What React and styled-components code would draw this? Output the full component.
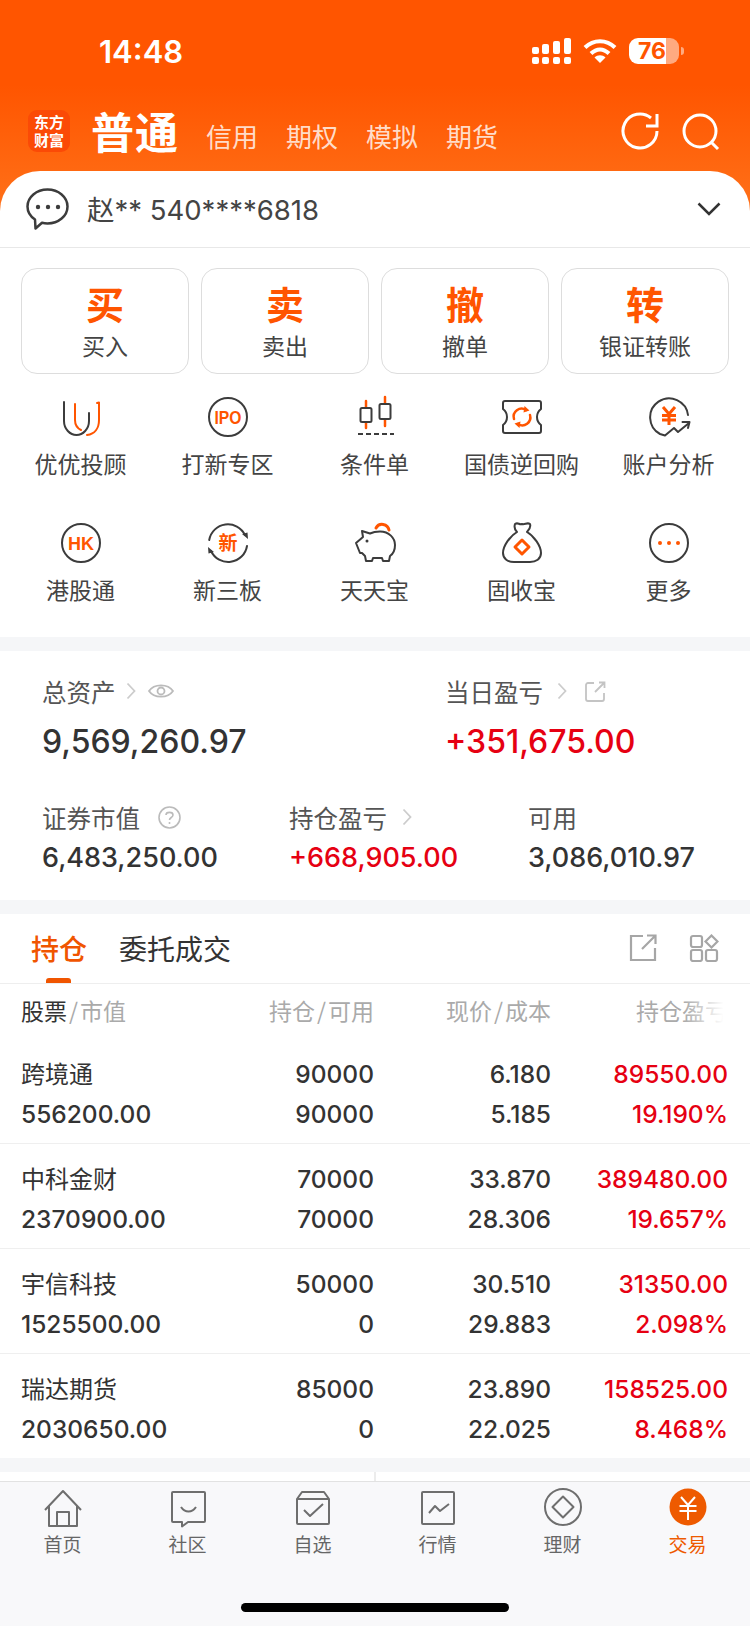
import React from 'react';
import styled, { createGlobalStyle } from 'styled-components';

const CJK = '"Noto Sans CJK SC", sans-serif';
const NUM = 'Inter, "Noto Sans CJK SC", sans-serif';
const ORANGE = '#ff5500';
const RED = '#e60012';
const DARK = '#333333';
const GRAY_BG = '#f5f6f8';

const GlobalStyle = createGlobalStyle`
  html, body {
    margin: 0;
    padding: 0;
    background: #ffffff;
  }
  * {
    box-sizing: border-box;
  }
`;

const Page = styled.div`
  width: 750px;
  height: 1626px;
  overflow: hidden;
  font-family: ${CJK};
  color: ${DARK};
  background: linear-gradient(180deg, #ff5500 0, #ff5500 85px, #ff7119 211px) no-repeat top / 100% 211px, #ffffff;
`;

const StatusBar = styled.div`
  height: 102px;
  display: flex;
  align-items: center;
  padding: 0 71px 0 99px;
`;
const Clock = styled.div`
  font-family: Inter, sans-serif;
  font-weight: 600;
  font-size: 31px;
  color: #ffffff;
  flex: 1;
`;
const StatusIcons = styled.div`
  display: flex;
  align-items: center;
  gap: 12px;
`;
const Battery = styled.div`
  position: relative;
  width: 50px;
  height: 26px;
  border-radius: 9px;
  background: linear-gradient(90deg, #ffffff 75%, rgba(255, 255, 255, 0.5) 75%);
  color: ${ORANGE};
  font-family: Inter, sans-serif;
  font-weight: 700;
  font-size: 23px;
  line-height: 26px;
  padding-left: 9px;
  &::after {
    content: '';
    position: absolute;
    right: -5px;
    top: 9px;
    width: 3px;
    height: 8px;
    border-radius: 0 3px 3px 0;
    background: rgba(255, 255, 255, 0.5);
  }
`;

const Nav = styled.div`
  height: 69px;
  padding: 8px 30px 0 28px;
  display: flex;
  align-items: flex-start;
`;
const Logo = styled.div`
  width: 42px;
  height: 42px;
  border-radius: 9px;
  background: #fb4a06;
  color: #ffffff;
  font-weight: 700;
  font-size: 15px;
  line-height: 18px;
  text-align: center;
  padding-top: 3px;
`;
const NavMain = styled.div`
  margin: -3px 0 0 21px;
  width: 115px;
  font-weight: 700;
  font-size: 43px;
  line-height: 46px;
  letter-spacing: 1px;
  color: #ffffff;
`;
const NavTabs = styled.div`
  display: flex;
  gap: 28px;
  flex: 1;
  margin-top: 9px;
`;
const NavTab = styled.div`
  font-size: 26px;
  line-height: 34px;
  color: rgba(255, 255, 255, 0.8);
`;
const NavIcons = styled.div`
  display: flex;
  gap: 20px;
  margin-top: 1px;
`;

const AccountRow = styled.div`
  height: 77px;
  background: #ffffff;
  border-radius: 40px 40px 0 0;
  border-bottom: 1px solid #e8e8e8;
  display: flex;
  align-items: center;
  padding: 0 29px 0 26px;
`;
const AccountName = styled.div`
  flex: 1;
  margin: -2px 0 0 17px;
  font-family: ${NUM};
  font-size: 27.5px;
  color: #444444;
`;

const Actions = styled.div`
  display: grid;
  grid-template-columns: repeat(4, 168px);
  gap: 12px;
  padding: 20px 21px 0;
`;
const Action = styled.div`
  height: 106px;
  border: 1.5px solid #dddddd;
  border-radius: 16px;
  display: flex;
  flex-direction: column;
  align-items: center;
  padding-top: 9px;
`;
const ActionMain = styled.div`
  font-weight: 700;
  font-size: 38px;
  line-height: 50px;
  color: ${ORANGE};
`;
const ActionSub = styled.div`
  font-size: 23px;
  line-height: 30px;
  margin-top: 2px;
  color: #444444;
`;

const Shortcuts = styled.div`
  display: grid;
  grid-template-columns: repeat(5, 147px);
  row-gap: 41px;
  padding: 21px 0 31px 7px;
`;
const Shortcut = styled.div`
  height: 85px;
  display: flex;
  flex-direction: column;
  align-items: center;
`;
const ShortcutLabel = styled.div`
  margin-top: 9px;
  font-size: 23px;
  line-height: 30px;
  white-space: nowrap;
  color: #444444;
`;

const Divider = styled.div`
  height: 14px;
  background: ${GRAY_BG};
`;

const Assets = styled.div`
  height: 249px;
  padding: 24px 0 0 42px;
`;
const AssetRow = styled.div`
  display: grid;
  grid-template-columns: ${p => p.$cols};
  margin-top: ${p => p.$top || 0}px;
`;
const AssetLabel = styled.div`
  display: flex;
  align-items: center;
  height: 32px;
  font-size: 24.5px;
  color: #555555;
`;
const BigValue = styled.div`
  margin-top: 15px;
  font-family: ${NUM};
  font-weight: 550;
  font-size: 32px;
  line-height: 40px;
  color: ${p => p.$color || DARK};
`;
const SmallValue = styled.div`
  margin-top: 7px;
  font-family: ${NUM};
  font-weight: 550;
  font-size: 27px;
  line-height: 36px;
  color: ${p => p.$color || DARK};
`;

const TabsRow = styled.div`
  height: 70px;
  border-bottom: 1px solid #eeeeee;
  display: flex;
  padding: 0 31px 0 31px;
`;
const HoldTab = styled.div`
  position: relative;
  height: 69px;
  margin-right: 32px;
  font-size: 28px;
  line-height: 68px;
  font-weight: ${p => (p.$active ? 500 : 400)};
  color: ${p => (p.$active ? '#f05500' : DARK)};
  ${p => p.$active && `
    &::after {
      content: '';
      position: absolute;
      left: 15px;
      bottom: 0;
      width: 25px;
      height: 5px;
      border-radius: 3px 3px 0 0;
      background: #f05500;
    }
  `}
`;
const TabsTools = styled.div`
  margin-left: auto;
  display: flex;
  align-items: center;
  gap: 32px;
  padding-bottom: 2px;
`;

const TableGrid = styled.div`
  display: grid;
  grid-template-columns: 201px 152px 177px 177px;
  padding-left: 21px;
`;
const TableHead = styled(TableGrid)`
  height: 55px;
  padding-bottom: 3px;
  align-items: center;
`;
const HeadCell = styled.div`
  position: relative;
  text-align: ${p => (p.$left ? 'left' : 'right')};
  font-size: 23px;
  line-height: 32px;
  color: #aaaaaa;
  ${p => p.$fade && `
    &::after {
      content: '';
      position: absolute;
      right: 0;
      top: 0;
      bottom: 0;
      width: 44px;
      background: linear-gradient(90deg, rgba(255, 255, 255, 0), #ffffff 90%);
    }
  `}
`;
const Strong = styled.span`
  color: ${DARK};
`;
const Slash = styled.span`
  margin: 0 2px;
`;
const Row = styled(TableGrid)`
  height: 105px;
  padding-top: 18px;
  row-gap: 6px;
  grid-auto-rows: 34px;
  border-bottom: 1px solid #efefef;
  &:last-child {
    height: 104px;
    border-bottom: none;
  }
`;
const Cell = styled.div`
  font-family: ${NUM};
  font-weight: 550;
  font-size: 24.5px;
  line-height: 34px;
  text-align: right;
  color: ${p => (p.$red ? RED : DARK)};
`;
const NameCell = styled(Cell)`
  font-family: ${CJK};
  font-weight: 400;
  font-size: 24px;
  line-height: 32px;
  text-align: left;
`;
const ValueCell = styled(Cell)`
  text-align: left;
`;

const Strip = styled.div`
  height: 9px;
  display: grid;
  grid-template-columns: 374px 374px;
  gap: 2px;
  background: #ececec;
`;
const StripPanel = styled.div`
  background: #ffffff;
`;

const TabBar = styled.div`
  height: 145px;
  background: #f8f8fa;
  border-top: 1px solid #e2e2e2;
  padding-top: 6px;
`;
const TabGrid = styled.div`
  display: grid;
  grid-template-columns: repeat(6, 125px);
`;
const TabItem = styled.div`
  display: flex;
  flex-direction: column;
  align-items: center;
  color: ${p => (p.$active ? '#ee5a00' : '#666666')};
`;
const TabLabel = styled.div`
  margin-top: 4px;
  font-size: 19px;
  line-height: 24px;
`;
const HomeIndicator = styled.div`
  width: 268px;
  height: 9px;
  margin: 47px auto 0;
  border-radius: 5px;
  background: #000000;
`;

const Svg = styled.svg`
  display: block;
  flex: none;
  margin-left: ${p => p.$ml || 0}px;
`;

const OrangeText = styled.text`
  font-family: "Liberation Sans", ${CJK};
  font-weight: 700;
  fill: ${ORANGE};
`;

const ShortcutSvg = ({ children }) => (
  <Svg width="44" height="44" viewBox="0 0 44 44" fill="none" stroke="#3c3c3c" strokeWidth="2" strokeLinejoin="round" strokeLinecap="round">
    {children}
  </Svg>
);

const IconU = () => (
  <ShortcutSvg>
    <path d="M5 7V26c0 8 6 14 12.5 14S30 34 30 26V18" />
    <path d="M16 9V25c0 4 2 8 6 10" stroke={ORANGE} />
    <path d="M38 8l2-.5V25c0 8-4 14-12 15" stroke={ORANGE} />
  </ShortcutSvg>
);
const IconIpo = () => (
  <ShortcutSvg>
    <circle cx="22" cy="22" r="19" />
    <OrangeText x="22" y="28.500" fontSize="18.500" textAnchor="middle" textLength="27" lengthAdjust="spacingAndGlyphs" stroke="none">IPO</OrangeText>
  </ShortcutSvg>
);
const IconCandle = () => (
  <ShortcutSvg>
    <path d="M13 6V33M32 2V31" stroke={ORANGE} strokeWidth="2.5" />
    <rect x="7.5" y="13" width="11" height="14" rx="1.5" fill="#ffffff" />
    <rect x="26.5" y="9" width="11" height="15" rx="1.5" fill="#ffffff" />
    <path d="M5 39H41" strokeDasharray="5 3" strokeLinecap="butt" />
  </ShortcutSvg>
);
const IconTicket = () => (
  <ShortcutSvg>
    <path d="M5 6h34a2 2 0 0 1 2 2v6a10 10 0 0 0 0 16v6a2 2 0 0 1-2 2H5a2 2 0 0 1-2-2v-6a10 10 0 0 0 0-16V8a2 2 0 0 1 2-2z" />
    <path d="M14 24a8 8 0 0 1 12-9M30 20a8 8 0 0 1-12 9" stroke={ORANGE} strokeWidth="2.5" />
    <path d="M24.5 11l5 4.5-6 2zM19.5 33l-5-4.5 6-2z" fill={ORANGE} stroke="none" />
  </ShortcutSvg>
);
const IconAnalysis = () => (
  <ShortcutSvg>
    <path d="M41 20A19 19 0 1 0 13 39L18 40.5 27 33 31 37 42 28M35.5 27H42.500L41 33" />
    <path d="M16 12l6 7 6-7M15 20.500H29M15 25H29M22 19V30" stroke={ORANGE} strokeWidth="3" strokeLinecap="butt" />
  </ShortcutSvg>
);
const IconHk = () => (
  <ShortcutSvg>
    <circle cx="22" cy="22" r="19" />
    <OrangeText x="22" y="28.500" fontSize="18" textAnchor="middle" stroke="none">HK</OrangeText>
  </ShortcutSvg>
);
const IconNew = () => (
  <ShortcutSvg>
    <path d="M3.200 19A19 19 0 0 1 39 14M41 25A19 19 0 0 1 5 30" />
    <path d="M36 13l5.500-1.500.5 6.500zM8 31l-5.500 1.500L2 26z" fill="#3c3c3c" stroke="none" />
    <OrangeText x="22" y="29" fontSize="19" textAnchor="middle" stroke="none">新</OrangeText>
  </ShortcutSvg>
);
const IconPig = () => (
  <ShortcutSvg>
    <path d="M3 22L10 16 9 10 17 12.500C20 11 24 10.500 27 10.500 36 10.500 42 17 42 24 42 29 40 33 37 35L36 40H30L29 37H20L19 40H13L12 35 9 32H7Z" />
    <circle cx="14" cy="20" r="1.500" fill="#3c3c3c" stroke="none" />
    <path d="M23 7A7 7 0 0 1 36 9" stroke={ORANGE} strokeWidth="3" />
  </ShortcutSvg>
);
const IconBag = () => (
  <ShortcutSvg>
    <path d="M15 3C18 1 19 4 22 3 25 4 27 1 30 3 31 6 29 9 27 11 34 15 41 25 41 32 41 38 36 41 30 41H14C8 41 3 38 3 32 3 25 10 15 17 11 15 9 14 6 15 3Z" />
    <path d="M22 19L29 26 22 33 15 26Z" stroke={ORANGE} strokeWidth="3" />
  </ShortcutSvg>
);
const IconMore = () => (
  <ShortcutSvg>
    <circle cx="22" cy="22" r="19" />
    <circle cx="13" cy="22" r="2" fill={ORANGE} stroke="none" />
    <circle cx="22" cy="22" r="2" fill={ORANGE} stroke="none" />
    <circle cx="31" cy="22" r="2" fill={ORANGE} stroke="none" />
  </ShortcutSvg>
);

const Chevron = ({ ml }) => (
  <Svg $ml={ml} width="10" height="18" viewBox="0 0 10 18" fill="none" stroke="#cccccc" strokeWidth="1.800">
    <path d="M1.500 1.500L8.500 9 1.500 16.500" />
  </Svg>
);

const TabSvg = ({ children, size = 40 }) => (
  <Svg width={size} height={size} viewBox={`0 0 ${size} ${size}`} fill="none" stroke="#6e6e6e" strokeWidth="2" strokeLinejoin="round">
    {children}
  </Svg>
);

const shortcuts = [
  ['优优投顾', IconU],
  ['打新专区', IconIpo],
  ['条件单', IconCandle],
  ['国债逆回购', IconTicket],
  ['账户分析', IconAnalysis],
  ['港股通', IconHk],
  ['新三板', IconNew],
  ['天天宝', IconPig],
  ['固收宝', IconBag],
  ['更多', IconMore],
];

const actions = [
  ['买', '买入'],
  ['卖', '卖出'],
  ['撤', '撤单'],
  ['转', '银证转账'],
];

const holdings = [
  ['跨境通', '556200.00', '90000', '90000', '6.180', '5.185', '89550.00', '19.190%'],
  ['中科金财', '2370900.00', '70000', '70000', '33.870', '28.306', '389480.00', '19.657%'],
  ['宇信科技', '1525500.00', '50000', '0', '30.510', '29.883', '31350.00', '2.098%'],
  ['瑞达期货', '2030650.00', '85000', '0', '23.890', '22.025', '158525.00', '8.468%'],
];

const tabs = [
  ['首页', (
    <TabSvg key="i">
      <path d="M2 22L20 3 38 22M6 18V38H34V18M14 38V24H26V38" />
    </TabSvg>
  )],
  ['社区', (
    <TabSvg key="i">
      <path d="M5 4H36a1 1 0 0 1 1 1V33a1 1 0 0 1-1 1H20L14 38.500V34H5a1 1 0 0 1-1-1V5a1 1 0 0 1 1-1Z" />
      <path d="M13 19c4 6 11 6 15 0" />
    </TabSvg>
  )],
  ['自选', (
    <TabSvg key="i">
      <path d="M4 11L9 4H31L36 11V35a1 1 0 0 1-1 1H5a1 1 0 0 1-1-1ZM4 11H36" />
      <path d="M11 22L17 28 30 16" />
    </TabSvg>
  )],
  ['行情', (
    <TabSvg key="i">
      <rect x="4" y="4" width="32" height="32" rx="1" />
      <path d="M11 25L17 18 22 23 31 16" />
    </TabSvg>
  )],
  ['理财', (
    <TabSvg key="i">
      <circle cx="20" cy="19" r="18" />
      <path d="M20 8.500L30.500 19 20 29.500 9.500 19Z" />
    </TabSvg>
  )],
  ['交易', (
    <TabSvg key="i">
      <circle cx="20" cy="19" r="18.500" fill="#ee5a00" stroke="none" />
      <path d="M13 9l7 8 7-8M11.500 18H28.500M11.500 23H28.500M20 17V32" stroke="#ffffff" />
    </TabSvg>
  ), true],
];

export default function App() {
  return (
    <Page>
      <GlobalStyle />
      <StatusBar>
        <Clock>14:48</Clock>
        <StatusIcons>
          <Svg width="39" height="26" viewBox="0 0 39 26" fill="#ffffff">
            <rect x="0" y="19" width="7" height="7" rx="2" />
            <rect x="10" y="19" width="7" height="7" rx="2" />
            <rect x="21" y="19" width="7" height="7" rx="2" />
            <rect x="32" y="19" width="7" height="7" rx="2" />
            <rect x="0" y="9" width="7" height="7" rx="2" />
            <rect x="10" y="6" width="7" height="10" rx="2" />
            <rect x="21" y="3" width="7" height="13" rx="2" />
            <rect x="32" y="0" width="7" height="16" rx="2" />
          </Svg>
          <Svg width="34" height="26" viewBox="0 0 34 26" fill="none" stroke="#ffffff" strokeWidth="4">
            <path d="M2 9.500C10.500 1 23.500 1 32 9.500" />
            <path d="M8 15.500C13.500 10 20.500 10 26 15.500" />
            <path d="M17 25L11.500 19.500C14.500 16.500 19.500 16.500 22.500 19.500Z" fill="#ffffff" stroke="none" />
          </Svg>
          <Battery>76</Battery>
        </StatusIcons>
      </StatusBar>

      <Nav>
        <Logo>东方<br />财富</Logo>
        <NavMain>普通</NavMain>
        <NavTabs>
          {['信用', '期权', '模拟', '期货'].map(t => <NavTab key={t}>{t}</NavTab>)}
        </NavTabs>
        <NavIcons>
          <Svg width="40" height="40" viewBox="0 0 40 40" fill="none" stroke="#ffffff" strokeWidth="3">
            <path d="M37 20A17 17 0 1 1 31 7" />
            <path d="M37 3V15H26" />
          </Svg>
          <Svg width="40" height="40" viewBox="0 0 40 40" fill="none" stroke="#ffffff" strokeWidth="3">
            <circle cx="20" cy="20" r="16" />
            <path d="M31 31L38 38" />
          </Svg>
        </NavIcons>
      </Nav>

      <AccountRow>
        <Svg width="44" height="44" viewBox="0 0 44 44" fill="none" stroke="#3c3c3c" strokeWidth="2.500" strokeLinejoin="round">
          <path d="M21.500 2.500C32.500 2.500 41.500 10 41.500 19.500S32.500 36.500 21.500 36.500C19.500 36.500 17.500 36.200 16 35.800L9.500 41.500 9 32.500C4.500 29.500 1.500 25 1.500 19.500 1.500 10 10.500 2.500 21.500 2.500Z" />
          <circle cx="12" cy="20" r="2.200" fill="#3c3c3c" stroke="none" />
          <circle cx="22" cy="20" r="2.200" fill="#3c3c3c" stroke="none" />
          <circle cx="32" cy="20" r="2.200" fill="#3c3c3c" stroke="none" />
        </Svg>
        <AccountName>赵** 540****6818</AccountName>
        <Svg width="24" height="14" viewBox="0 0 24 14" fill="none" stroke="#333333" strokeWidth="2.500">
          <path d="M1.500 1.500L12 12 22.500 1.500" />
        </Svg>
      </AccountRow>

      <Actions>
        {actions.map(([main, sub]) => (
          <Action key={main}>
            <ActionMain>{main}</ActionMain>
            <ActionSub>{sub}</ActionSub>
          </Action>
        ))}
      </Actions>

      <Shortcuts>
        {shortcuts.map(([label, Icon]) => (
          <Shortcut key={label}>
            <Icon />
            <ShortcutLabel>{label}</ShortcutLabel>
          </Shortcut>
        ))}
      </Shortcuts>

      <Divider />

      <Assets>
        <AssetRow $cols="403px 1fr">
          <div>
            <AssetLabel>
              总资产
              <Chevron ml={10} />
              <Svg $ml={12} width="26" height="18" viewBox="0 0 26 18" fill="none" stroke="#bbbbbb" strokeWidth="1.800">
                <path d="M1 9C6 1.500 20 1.500 25 9 20 16.500 6 16.500 1 9Z" />
                <circle cx="13" cy="9" r="3.500" />
              </Svg>
            </AssetLabel>
            <BigValue>9,569,260.97</BigValue>
          </div>
          <div>
            <AssetLabel>
              当日盈亏
              <Chevron ml={14} />
              <Svg $ml={18} width="21" height="21" viewBox="0 0 21 21" fill="none" stroke="#c4c4c4" strokeWidth="1.800">
                <path d="M9 2H3a2 2 0 0 0-2 2V18a2 2 0 0 0 2 2H17a2 2 0 0 0 2-2V12" />
                <path d="M10 11L19 2M14 1.500H19.500V7" />
              </Svg>
            </AssetLabel>
            <BigValue $color={RED}>+351,675.00</BigValue>
          </div>
        </AssetRow>
        <AssetRow $cols="247px 239px 1fr" $top={39}>
          <div>
            <AssetLabel>
              证券市值
              <Svg $ml={18} width="23" height="23" viewBox="0 0 23 23" fill="none" stroke="#bbbbbb" strokeWidth="1.600">
                <circle cx="11.500" cy="11.500" r="10.500" />
                <path d="M8 9C8 5.500 15 5.500 15 9 15 11.500 11.500 11.500 11.500 14" />
                <circle cx="11.500" cy="17" r="1" fill="#bbbbbb" stroke="none" />
              </Svg>
            </AssetLabel>
            <SmallValue>6,483,250.00</SmallValue>
          </div>
          <div>
            <AssetLabel>
              持仓盈亏
              <Chevron ml={15} />
            </AssetLabel>
            <SmallValue $color={RED}>+668,905.00</SmallValue>
          </div>
          <div>
            <AssetLabel>可用</AssetLabel>
            <SmallValue>3,086,010.97</SmallValue>
          </div>
        </AssetRow>
      </Assets>

      <Divider />

      <TabsRow>
        <HoldTab $active>持仓</HoldTab>
        <HoldTab>委托成交</HoldTab>
        <TabsTools>
          <Svg width="28" height="28" viewBox="0 0 28 28" fill="none" stroke="#a6a6a6" strokeWidth="2.200">
            <path d="M14 2H2V26H26V14" />
            <path d="M13 15L26 2M18 1.500H26.500V10" />
          </Svg>
          <Svg width="30" height="28" viewBox="0 0 30 28" fill="none" stroke="#a6a6a6" strokeWidth="2.200">
            <rect x="2" y="2" width="11" height="11" rx="2" />
            <rect x="2" y="16" width="11" height="11" rx="2" />
            <rect x="17" y="16" width="11" height="11" rx="2" />
            <path d="M22.500 1.500L28.500 7.500 22.500 13.500 16.500 7.500Z" />
          </Svg>
        </TabsTools>
      </TabsRow>

      <TableHead>
        <HeadCell $left><Strong>股票</Strong><Slash>/</Slash>市值</HeadCell>
        <HeadCell>持仓<Slash>/</Slash>可用</HeadCell>
        <HeadCell>现价<Slash>/</Slash>成本</HeadCell>
        <HeadCell $fade>持仓盈亏</HeadCell>
      </TableHead>

      <div>
        {holdings.map(([name, value, pos, avail, price, cost, pl, pct]) => (
          <Row key={name}>
            <NameCell>{name}</NameCell>
            <Cell>{pos}</Cell>
            <Cell>{price}</Cell>
            <Cell $red>{pl}</Cell>
            <ValueCell>{value}</ValueCell>
            <Cell>{avail}</Cell>
            <Cell>{cost}</Cell>
            <Cell $red>{pct}</Cell>
          </Row>
        ))}
      </div>

      <Divider />
      <Strip>
        <StripPanel />
        <StripPanel />
      </Strip>

      <TabBar>
        <TabGrid>
          {tabs.map(([label, icon, active]) => (
            <TabItem key={label} $active={active}>
              {icon}
              <TabLabel>{label}</TabLabel>
            </TabItem>
          ))}
        </TabGrid>
        <HomeIndicator />
      </TabBar>
    </Page>
  );
}
